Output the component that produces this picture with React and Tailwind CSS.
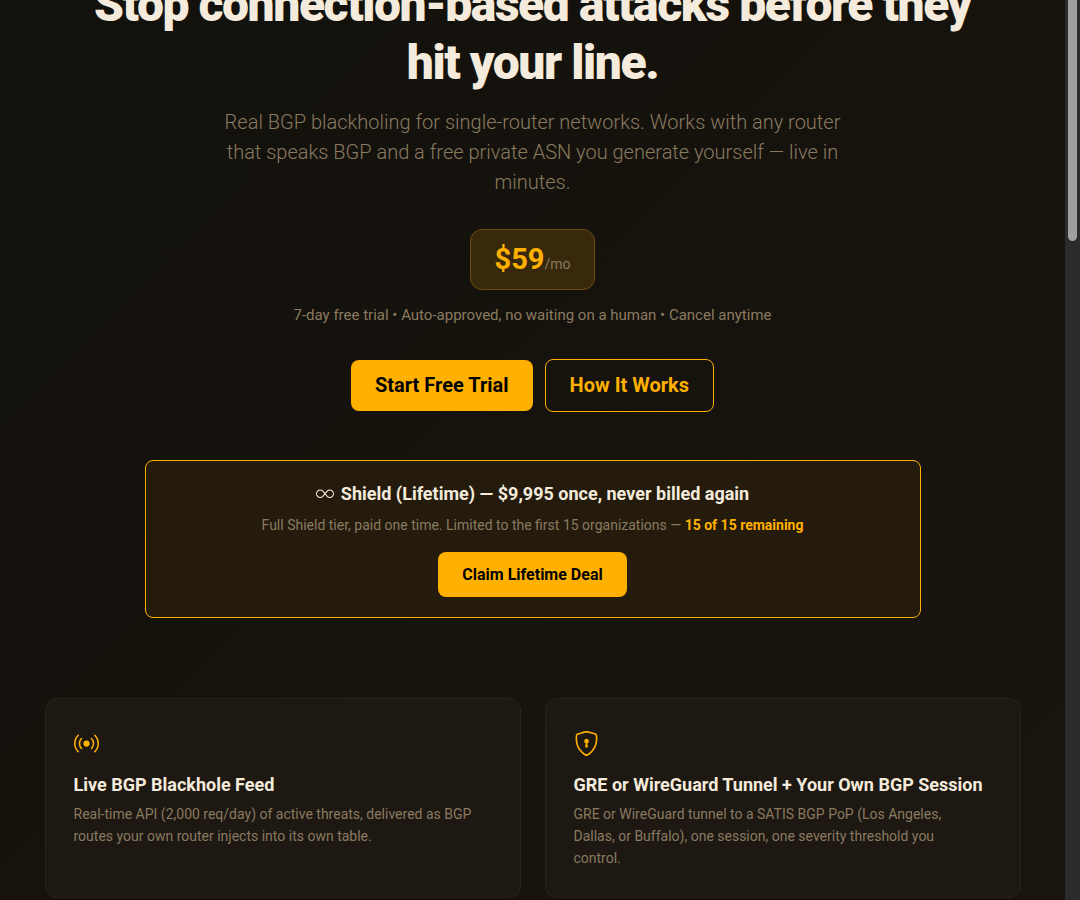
import { BsBroadcast, BsInfinity, BsShieldLock } from "react-icons/bs";

const features = [
  {
    icon: BsBroadcast,
    title: "Live BGP Blackhole Feed",
    text: "Real-time API (2,000 req/day) of active threats, delivered as BGP routes your own router injects into its own table.",
  },
  {
    icon: BsShieldLock,
    title: "GRE or WireGuard Tunnel + Your Own BGP Session",
    text: "GRE or WireGuard tunnel to a SATIS BGP PoP (Los Angeles, Dallas, or Buffalo), one session, one severity threshold you control.",
  },
];

function Feature({ icon: Icon, title, text }) {
  return (
    <article className="rounded-xl border border-[#292319] bg-[#1d1812] px-7 pt-8 pb-7">
      <Icon aria-hidden="true" className="size-[25px] text-[#ffb000]" />
      <h2 className="mt-[18px] text-[18px] leading-[22px] font-bold text-[#f5ebdc]">{title}</h2>
      <p className="mt-[7px] max-w-[404px] text-[14px] leading-[22px] text-[#8a7a60]">{text}</p>
    </article>
  );
}

export default function App() {
  return (
    <div className="flex h-screen overflow-hidden bg-[#1a100f] font-[Roboto,sans-serif] text-[#f5ebdc]">
      <main className="min-w-0 flex-1">
        <div className="bg-linear-135 from-[#12110c] to-[#1a140e]">
          <section className="-mt-6 flex flex-col items-center text-center">
            <h1 className="max-w-[900px] text-[48px] leading-[58px] font-black tracking-[-0.03em]">
              Stop connection-based attacks before they hit your line.
            </h1>
            <p className="mt-[15px] max-w-[640px] text-[20px] leading-[30px] font-light text-[#8a7a60]">
              Real BGP blackholing for single-router networks. Works with any router that speaks BGP
              and a free private ASN you generate yourself — live in minutes.
            </p>
            <div className="mt-8 flex items-baseline rounded-xl border border-[#6b4d0f] bg-[#38290d] px-6 py-2">
              <span className="text-[29px] leading-[43px] font-bold text-[#ffb000]">$59</span>
              <span className="text-[14px] leading-none text-[#8a7a60]">/mo</span>
            </div>
            <p className="mt-[14px] text-[15px] leading-[23px] text-[#8a7a60]">
              7-day free trial • Auto-approved, no waiting on a human • Cancel anytime
            </p>
            <div className="mt-8 flex items-center justify-center gap-3 text-[20px] leading-[31px] font-bold">
              <a href="#trial" className="rounded-lg bg-[#ffb000] px-6 py-[10px] text-black">
                Start Free Trial
              </a>
              <a href="#how" className="rounded-lg border border-[#ffb000] px-6 py-[10px] text-[#ffb000]">
                How It Works
              </a>
            </div>
            <div className="mt-12 flex w-full max-w-[776px] flex-col items-center rounded-lg border border-[#ffb000] bg-[#241b0c] px-6 pt-5 pb-5">
              <h2 className="flex items-center gap-[7px] text-[18px] leading-[26px] font-bold">
                <BsInfinity aria-hidden="true" className="size-[18px]" />
                Shield (Lifetime) — $9,995 once, never billed again
              </h2>
              <p className="mt-[7px] text-[14px] leading-[22px] text-[#8a7a60]">
                Full Shield tier, paid one time. Limited to the first 15 organizations —{" "}
                <strong className="font-bold text-[#ffb000]">15 of 15 remaining</strong>
              </p>
              <a
                href="#lifetime"
                className="mt-4 rounded-lg bg-[#ffb000] px-6 py-[10px] text-[16px] leading-[25px] font-bold text-black"
              >
                Claim Lifetime Deal
              </a>
            </div>
          </section>
          <section className="mx-auto mt-20 grid max-w-[976px] grid-cols-2 gap-6">
            {features.map((f) => (
              <Feature key={f.title} {...f} />
            ))}
          </section>
        </div>
      </main>
      <div aria-hidden="true" className="w-[15px] bg-[#2c2c2c] px-[3px]">
        <div className="h-[241px] rounded-b-full bg-[#9f9f9f]" />
      </div>
    </div>
  );
}
